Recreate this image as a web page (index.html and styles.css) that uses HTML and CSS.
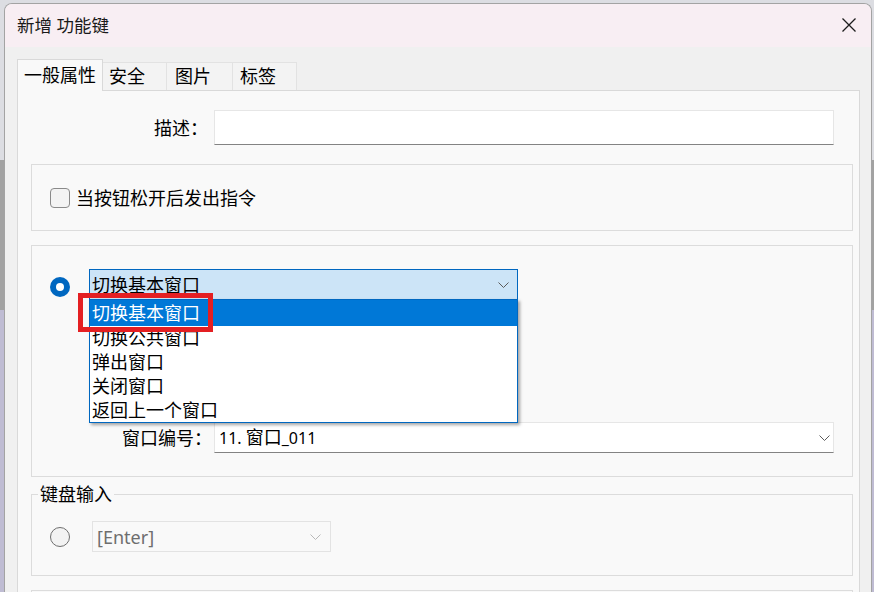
FILE: index.html
```html
<!DOCTYPE html>
<html lang="zh-CN">
<head>
<meta charset="utf-8">
<title>新增 功能键</title>
<link rel="stylesheet" href="styles.css">
</head>
<body>
<div class="desktop">
  <div class="dialog">
    <div class="titlebar">
      <span class="title">新增 功能键</span>
      <svg class="close" width="14" height="14" viewBox="0 0 14 14"><path d="M0.5 0.5L13.5 13.5M13.5 0.5L0.5 13.5" stroke="#1c1c1c" stroke-width="1.3" fill="none"/></svg>
    </div>
    <div class="content">
      <div class="tabs">
        <div class="tab active tab-general">一般属性</div>
        <div class="tab tab-security">安全</div>
        <div class="tab tab-picture">图片</div>
        <div class="tab tab-label">标签</div>
      </div>
      <div class="panel">
        <div class="desc-row">
          <span class="lbl lbl-desc">描述：</span>
          <div class="textbox"></div>
        </div>
        <div class="group g1">
          <span class="checkbox"></span>
          <span class="check-text">当按钮松开后发出指令</span>
        </div>
        <div class="group g2">
          <div class="combo-row">
            <span class="radio on"></span>
            <div class="combo combo-active">
              <span>切换基本窗口</span>
              <svg class="chev" width="11" height="6" viewBox="0 0 11 6"><path d="M0.5 0.5L5.5 5.5L10.5 0.5" stroke="#5a5a5a" stroke-width="1" fill="none"/></svg>
            </div>
          </div>
          <div class="winno-row">
            <span class="lbl lbl-win">窗口编号：</span>
            <div class="combo combo-white">
              <span><span class="latin-sm">11. </span>窗口<span class="latin-sm">_011</span></span>
              <svg class="chev" width="11" height="6" viewBox="0 0 11 6"><path d="M0.5 0.5L5.5 5.5L10.5 0.5" stroke="#5a5a5a" stroke-width="1" fill="none"/></svg>
            </div>
          </div>
          <ul class="dropdown">
            <li class="item selected">切换基本窗口</li>
            <li class="item">切换公共窗口</li>
            <li class="item">弹出窗口</li>
            <li class="item">关闭窗口</li>
            <li class="item">返回上一个窗口</li>
          </ul>
          <div class="redbox"></div>
        </div>
        <div class="group g3">
          <span class="legend">键盘输入</span>
          <div class="key-row">
            <span class="radio"></span>
            <div class="combo combo-disabled">
              <span>[Enter]</span>
              <svg class="chev" width="11" height="6" viewBox="0 0 11 6"><path d="M0.5 0.5L5.5 5.5L10.5 0.5" stroke="#b8b8b8" stroke-width="1" fill="none"/></svg>
            </div>
          </div>
        </div>
        <div class="group g4"></div>
      </div>
    </div>
  </div>
</div>
</body>
</html>
```

FILE: styles.css
```css
* { box-sizing: border-box; }
html, body { margin: 0; padding: 0; }
body {
  width: 874px;
  height: 592px;
  overflow: hidden;
  font-family: "Noto Sans", "Noto Sans CJK SC", sans-serif;
  font-size: 18px;
  line-height: 24px;
  color: #000;
}
.desktop {
  width: 874px;
  height: 592px;
  overflow: hidden;
  padding: 3px 0 0 4px;
  background:
    linear-gradient(to bottom, #dcdde2 0, #dcdde2 160px, #a2a2a2 160px, #a2a2a2 310px, #bfbcd3 310px, #bfbcd3 100%);
}
.dialog {
  width: 868px;
  height: 620px;
  border: 1px solid #a3a3a3;
  border-bottom: none;
  border-radius: 8px 8px 0 0;
  overflow: hidden;
  background: #f0f0f0;
  display: flex;
  flex-direction: column;
}
.titlebar {
  height: 43px;
  flex: none;
  background: #f8eef3;
  display: flex;
  align-items: center;
  justify-content: space-between;
  padding: 0 15px 1px 12px;
}
.title { font-size: 17.5px; color: #1a1a1a; }
.close { display: block; }
.content {
  flex: 1;
  padding: 12px 11px 0 12px;
  background: #f0f0f0;
}
.tabs {
  height: 31px;
  display: flex;
  align-items: flex-end;
  position: relative;
  z-index: 2;
}
.tab {
  height: 28px;
  padding-left: 6px;
  line-height: 27px;
  background: #f3f3f3;
  border-top: 1px solid #e2e2e2;
  border-right: 1px solid #e2e2e2;
  color: #000;
}
.tab.active {
  height: 32px;
  margin-bottom: -1px;
  background: #f9f9f9;
  border: 1px solid #d9d9d9;
  border-bottom: none;
  line-height: 31px;
}
.tab-general { width: 86px; }
.tab-security { width: 64px; }
.tab-picture { width: 66px; padding-left: 8px; }
.tab-label { width: 64px; padding-left: 7px; }
.panel {
  height: 520px;
  background: #f9f9f9;
  border: 1px solid #d9d9d9;
  padding: 0 6px 0 13px;
}
.desc-row {
  margin-top: 19px;
  height: 35px;
  display: flex;
  align-items: center;
}
.lbl { text-align: right; flex: none; }
.lbl-desc { width: 177px; margin-right: 6px; }
.textbox {
  width: 620px;
  height: 35px;
  background: #fff;
  border: 1px solid #e6e6e6;
  border-bottom: 1px solid #838383;
}
.group {
  border: 1px solid #dcdcdc;
  position: relative;
}
.g1 {
  margin-top: 19px;
  height: 67px;
  display: flex;
  align-items: center;
  padding-left: 18px;
}
.checkbox {
  width: 20px;
  height: 20px;
  border: 1px solid #8a8a8a;
  border-radius: 4px;
  background: #f3f3f3;
  margin-right: 6px;
  flex: none;
}
.g2 {
  margin-top: 14px;
  padding: 23px 0 23px 18px;
}
.combo-row {
  display: flex;
  align-items: center;
  height: 31px;
}
.radio {
  width: 20px;
  height: 20px;
  border-radius: 50%;
  border: 1px solid #6f6f6f;
  background: #f3f3f3;
  flex: none;
}
.radio.on {
  border: none;
  background: #0067c0;
  position: relative;
  margin-top: 5px;
}
.radio.on::after {
  content: "";
  position: absolute;
  left: 6px;
  top: 6px;
  width: 8px;
  height: 8px;
  border-radius: 50%;
  background: #fff;
}
.combo {
  height: 31px;
  display: flex;
  align-items: center;
  justify-content: space-between;
  flex: none;
}
.chev { display: block; flex: none; }
.combo-active {
  width: 429px;
  margin-left: 19px;
  background: #cce4f7;
  border: 1px solid #0067c0;
  padding: 0 8px 0 2px;
}
.winno-row {
  margin-top: 122px;
  margin-left: -18px;
  display: flex;
  align-items: center;
  height: 31px;
}
.lbl-win { width: 180px; margin-right: 2px; }
.combo-white {
  width: 620px;
  background: #fff;
  border: 1px solid #e6e6e6;
  border-bottom: 1px solid #838383;
  padding: 0 3px 0 4px;
}
.latin-sm { font-size: 16px; }
.dropdown {
  position: absolute;
  left: 57px;
  top: 53px;
  width: 429px;
  height: 124px;
  margin: 0;
  padding: 0;
  list-style: none;
  background: #fff;
  border: 1px solid #0067c0;
  box-shadow: 2px 2px 3px rgba(0, 0, 0, 0.35);
  z-index: 3;
}
.item {
  height: 24px;
  line-height: 24px;
  padding-left: 2px;
  white-space: nowrap;
}
.item.selected {
  height: 26px;
  line-height: 26px;
  background: #0078d7;
  color: #fff;
}
.redbox {
  position: absolute;
  left: 46px;
  top: 47px;
  width: 135px;
  height: 39px;
  border: 5px solid #e41f22;
  z-index: 4;
}
.g3 {
  margin-top: 17px;
  padding: 26px 0 23px 18px;
}
.legend {
  position: absolute;
  left: 6px;
  top: -13px;
  padding: 0 2px;
  background: #f9f9f9;
  line-height: 24px;
}
.key-row {
  display: flex;
  align-items: center;
  height: 31px;
}
.combo-disabled {
  width: 239px;
  margin-left: 22px;
  background: #f9f9f9;
  border: 1px solid #e3e3e3;
  padding: 0 9px 0 4px;
  color: #6e6e6e;
}
.g4 {
  margin-top: 14px;
  height: 80px;
}
```
